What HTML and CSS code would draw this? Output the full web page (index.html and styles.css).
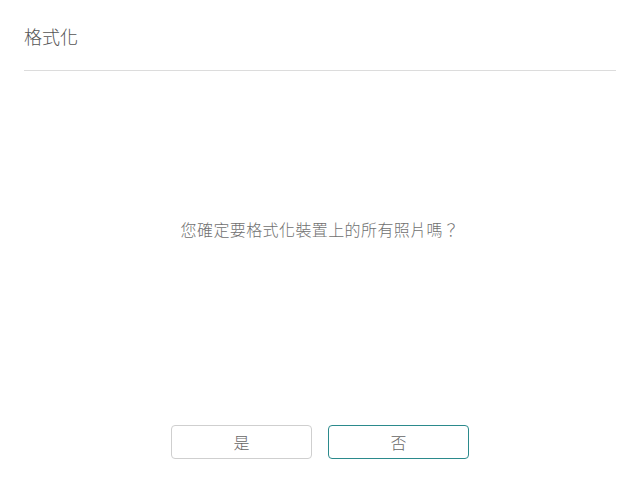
FILE: index.html
```html
<!DOCTYPE html>
<html lang="zh-Hant">

<head>
    <meta charset="UTF-8">
    <meta name="viewport" content="width=device-width, initial-scale=1.0">
    <title>格式化</title>
    <link rel="stylesheet" href="styles.css">
</head>

<body>
    <div class="dialog">
        <div class="dialog-header">
            <h2 class="dialog-title">格式化</h2>
        </div>

        <div class="dialog-body">
            <p class="message">您確定要格式化裝置上的所有照片嗎？</p>
        </div>

        <div class="dialog-footer">
            <button type="button" class="btn">是</button>
            <button type="button" class="btn btn-primary">否</button>
        </div>
    </div>
</body>

</html>
```

FILE: styles.css
```css
html,
body {
    margin: 0;
    height: 100%;
}

body {
    font-family: "Noto Sans CJK TC", "Noto Sans", sans-serif;
    background-color: #fff;
    color: #333;
}

.dialog {
    height: 484px;
    box-sizing: border-box;
    padding: 0 24px;
    display: flex;
    flex-direction: column;
}

.dialog-header {
    height: 71px;
    border-bottom: 1px solid #dcdcdc;
    box-sizing: border-box;
    display: flex;
    align-items: center;
}

.dialog-title {
    margin: 0;
    font-size: 18px;
    font-weight: 300;
    color: #555;
    line-height: 1;
    padding-top: 2px;
}

.dialog-body {
    flex: 1;
    display: flex;
    align-items: center;
    justify-content: center;
    padding-bottom: 38px;
}

.message {
    margin: 0;
    font-size: 16px;
    font-weight: 300;
    letter-spacing: 0.4px;
    color: #707070;
}

.dialog-footer {
    display: flex;
    justify-content: center;
    gap: 16px;
    padding-bottom: 25px;
}

.btn {
    width: 141px;
    height: 34px;
    background-color: #fff;
    border: 1px solid #cfcfcf;
    border-radius: 4px;
    font-family: inherit;
    font-size: 16px;
    font-weight: 300;
    color: #666;
    cursor: pointer;
}

.btn-primary {
    border: 1.5px solid #2b8a8c;
}
```
